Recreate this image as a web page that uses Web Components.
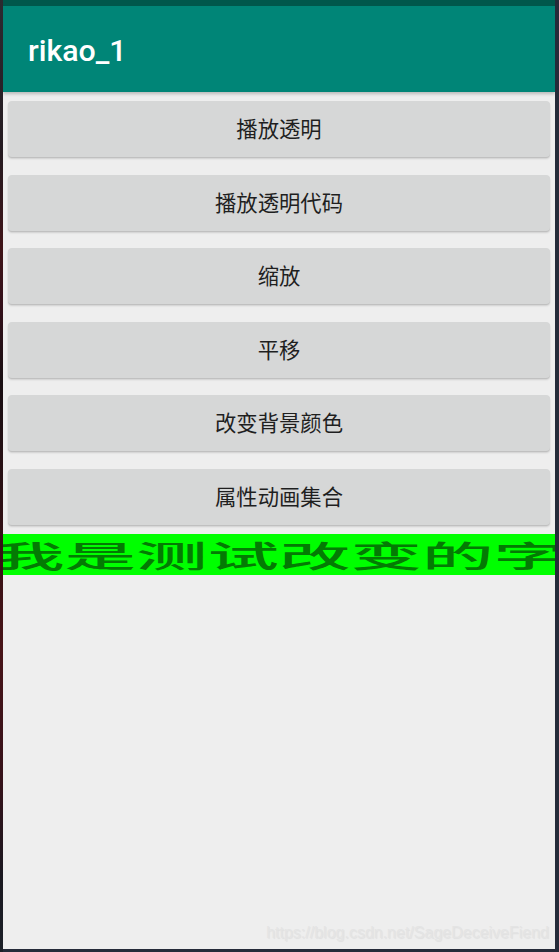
<!DOCTYPE html>
<html lang="zh">
<head>
<meta charset="utf-8">
<title>rikao_1</title>
<style>
html,body{margin:0;height:100%;}
body{width:559px;height:952px;overflow:hidden;background:#1f2530;font-family:Roboto,"Noto Sans CJK SC",sans-serif;}
</style>
</head>
<body>
<app-frame>
<app-bar title="rikao_1"></app-bar>
<app-button>播放透明</app-button>
<app-button>播放透明代码</app-button>
<app-button>缩放</app-button>
<app-button>平移</app-button>
<app-button>改变背景颜色</app-button>
<app-button>属性动画集合</app-button>
<stretch-text>我是测试改变的字</stretch-text>
<water-mark>https://blog.csdn.net/SageDeceiveFiend</water-mark>
</app-frame>
<script>
function def(name, css, html){
  customElements.define(name, class extends HTMLElement{
    constructor(){
      super();
      const r=this.attachShadow({mode:"open"});
      r.innerHTML="<style>"+css+"</style>"+html;
    }
    connectedCallback(){
      const t=this.shadowRoot.querySelector("[data-title]");
      if(t)t.textContent=this.getAttribute("title")||"";
    }
  });
}
def("app-frame",
 ":host{display:block;box-sizing:border-box;width:559px;height:952px;padding:0 4px 3px 3px;"+
 "background:linear-gradient(#2c2a30 0,#241a20 16%,#401418 26%,#34101a 32%,#180e12 40%,#2c1014 52%,#481418 68%,#36121a 82%,#1a1820 92%,#1c2028 100%) left top/3px 100% no-repeat,#252b39;}"+
 ".screen{position:relative;height:100%;display:flex;flex-direction:column;background:#eeeeee;overflow:hidden;}",
 '<div class="screen"><slot></slot></div>');
def("app-bar",
 ":host{display:block;flex:none;height:92px;box-sizing:border-box;border-top:6px solid #00574b;background:#008577;box-shadow:0 2px 3px rgba(0,0,0,.22);position:relative;z-index:1;}"+
 ".t{display:block;padding:27px 0 0 25px;font:500 30.3px/36px Roboto,sans-serif;color:#fff;}",
 '<span class="t" data-title></span>');
def("app-button",
 ":host{display:flex;flex:none;align-items:center;justify-content:center;box-sizing:border-box;height:56px;margin:9px 5px 8.6px 5px;padding-bottom:2px;background:#d6d7d7;border-radius:4px;box-shadow:0 1px 1px rgba(0,0,0,.1),0 2px 2px rgba(0,0,0,.12);font:400 21.33px/28px 'Noto Sans CJK SC',Roboto,sans-serif;color:#1f1f1f;}",
 "<slot></slot>");
def("stretch-text",
 ":host{display:flex;flex:none;justify-content:center;align-items:center;height:41.4px;background:#00ff00;overflow:hidden;}"+
 "span{display:block;flex:none;white-space:nowrap;font:500 30px/39px 'Noto Sans CJK SC',sans-serif;color:#047a04;transform:scaleX(2.383);}",
 "<span><slot></slot></span>");
def("water-mark",
 ":host{position:absolute;right:6px;bottom:5px;font:400 16px/22px 'Liberation Sans',sans-serif;color:#e4e4e4;text-shadow:1px 1px 1px rgba(0,0,0,.06);white-space:nowrap;}",
 "<slot></slot>");
</script>
</body>
</html>
